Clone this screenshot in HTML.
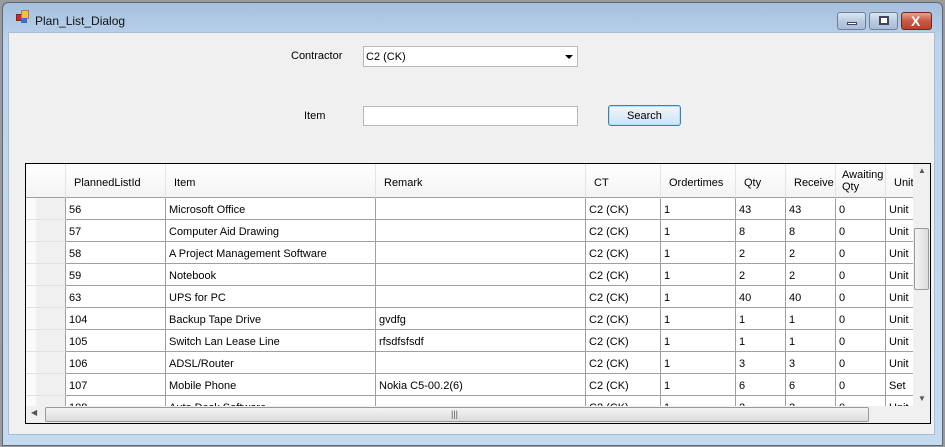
<!DOCTYPE html>
<html><head><meta charset="utf-8"><style>
*{box-sizing:border-box;margin:0;padding:0}
body{width:945px;height:447px;overflow:hidden;background:#9a9a9a;font-family:"Liberation Sans",sans-serif;font-size:11px;color:#000;position:relative}
.abs{position:absolute}
#win{left:2px;top:2px;width:941px;height:444px;border:1px solid #5a6a7a;border-radius:6px 6px 0 0;background:linear-gradient(#a6bfdc,#bcd4ee 40px,#c4daf0);}
#client{left:8px;top:32px;width:927px;height:403px;background:#f0f0f0;border:1px solid #a9bdd6}
.t{position:absolute;white-space:nowrap}
.btn{position:absolute;top:12px;height:18px;border:1px solid #6f7f93;border-radius:3px;background:linear-gradient(#dbe6f3,#b9cbe1 50%,#a8bdd8)}
#grid{left:25px;top:163px;width:906px;height:261px;border:1px solid #000;background:#fff;overflow:hidden}
.cell{position:absolute;height:22px;border-right:1px solid #a0a0a0;border-bottom:1px solid #a0a0a0;padding:6px 0 0 3px;white-space:nowrap;overflow:hidden}
.hd{position:absolute;top:0;height:34px;border-right:1px solid #e4e4e4;border-bottom:1px solid #a0a0a0;background:linear-gradient(#fff,#f3f3f3);padding-top:13px;padding-left:8px;white-space:nowrap;overflow:hidden}
</style></head><body>
<div id="win" class="abs"></div>
<div class="abs" style="left:16px;top:14px;width:7px;height:7px;background:#d22;border:1px solid #822"></div>
<div class="abs" style="left:21px;top:10px;width:8px;height:9px;background:#f4c430;border:1px solid #a77"></div>
<div class="abs" style="left:21px;top:18px;width:6px;height:5px;background:#3a6fd0"></div>
<div class="t" style="left:35px;top:14px;font-size:12px;color:#111">Plan_List_Dialog</div>
<div class="btn" style="left:837px;width:29px"><div class="abs" style="left:9px;top:9px;width:10px;height:3px;background:#fff;border:1px solid #445"></div></div>
<div class="btn" style="left:869px;width:29px"><div class="abs" style="left:9px;top:3px;width:10px;height:9px;border:2px solid #445;background:#fff"></div></div>
<div class="btn" style="left:901px;width:31px;background:linear-gradient(#e8a08c,#c75a44 50%,#b9412a);border-color:#6b2a20"><div class="t" style="left:9px;top:0px;color:#fff;font-weight:bold;font-size:14px">X</div></div>
<div id="client" class="abs"></div>
<div class="t" style="left:291px;top:50px">Contractor</div>
<div class="abs" style="left:363px;top:46px;width:215px;height:21px;background:#fff;border:1px solid #b8b8b8"><div class="t" style="left:2px;top:4px">C2 (CK)</div><div class="abs" style="left:201px;top:8px;border-left:4px solid transparent;border-right:4px solid transparent;border-top:4px solid #000"></div></div>
<div class="t" style="left:304px;top:110px">Item</div>
<div class="abs" style="left:363px;top:106px;width:215px;height:20px;background:#fff;border:1px solid #b8b8b8"></div>
<div class="abs" style="left:608px;top:105px;width:73px;height:21px;border:1px solid #3c7fb1;border-radius:3px;background:linear-gradient(#f0f6fb,#e0ecf7 50%,#cfe2f2);box-shadow:inset 0 0 0 1px #aee0f8"><div class="t" style="left:18px;top:4px">Search</div></div>
<div id="grid" class="abs">
<div class="abs" style="left:0;top:0;width:40px;height:261px;background:linear-gradient(90deg,#fbfbfb 10px,#f0f0f0 10px)"></div>
<div class="hd" style="left:0;width:40px"></div>
<div class="hd" style="left:40px;width:100px">PlannedListId</div>
<div class="hd" style="left:140px;width:210px">Item</div>
<div class="hd" style="left:350px;width:210px">Remark</div>
<div class="hd" style="left:560px;width:75px">CT</div>
<div class="hd" style="left:635px;width:75px">Ordertimes</div>
<div class="hd" style="left:710px;width:50px">Qty</div>
<div class="hd" style="left:760px;width:50px">Receive</div>
<div class="hd" style="left:810px;width:50px;padding-top:5px;padding-left:6px;line-height:12px">Awaiting<br>Qty</div>
<div class="hd" style="left:860px;width:30px">Unit</div>
<div id="rows"></div>
<div class="abs" style="left:887px;top:0;width:17px;height:242px;background:#f0f0f0"><div class="t" style="left:5px;top:2px;font-size:8px;color:#555">▲</div><div class="abs" style="left:1px;top:64px;width:15px;height:62px;border:1px solid #999;border-radius:2px;background:linear-gradient(90deg,#f4f4f4,#dcdcdc)"></div><div class="t" style="left:5px;top:230px;font-size:8px;color:#555">▼</div></div>
<div class="abs" style="left:0;top:242px;width:904px;height:17px;background:#f0f0f0"><div class="t" style="left:5px;top:2px;font-size:8px;color:#555">◀</div><div class="abs" style="left:19px;top:1px;width:824px;height:15px;border:1px solid #999;border-radius:2px;background:linear-gradient(#f4f4f4,#dcdcdc)"><div class="t" style="left:405px;top:1px;font-size:9px;color:#555">|||</div></div><div class="t" style="left:893px;top:2px;font-size:8px;color:#555">▶</div></div>
<div class="abs" style="left:887px;top:242px;width:17px;height:17px;background:#f0f0f0"></div>
</div>
<script>
var d=[["56","Microsoft Office","","43","43","Unit"],["57","Computer Aid Drawing","","8","8","Unit"],["58","A Project Management Software","","2","2","Unit"],["59","Notebook","","2","2","Unit"],["63","UPS for PC","","40","40","Unit"],["104","Backup Tape Drive","gvdfg","1","1","Unit"],["105","Switch Lan Lease Line","rfsdfsfsdf","1","1","Unit"],["106","ADSL/Router","","3","3","Unit"],["107","Mobile Phone","Nokia C5-00.2(6)","6","6","Set"],["108","Auto Desk Software","","2","2","Unit"]];
var cols=[[40,100],[140,210],[350,210],[560,75],[635,75],[710,50],[760,50],[810,50],[860,30]];
var h="";
d.forEach(function(r,i){var y=34+i*22;var v=[r[0],r[1],r[2],"C2 (CK)","1",r[3],r[4],"0",r[5]];
h+='<div class="abs" style="left:0;top:'+y+'px;width:40px;height:22px;border-bottom:1px solid #e2e2e2;border-right:1px solid #a0a0a0"></div>';
cols.forEach(function(c,j){h+='<div class="cell" style="left:'+c[0]+'px;top:'+y+'px;width:'+c[1]+'px">'+v[j]+'</div>';});});
document.getElementById("rows").innerHTML=h;
</script>
</body></html>
